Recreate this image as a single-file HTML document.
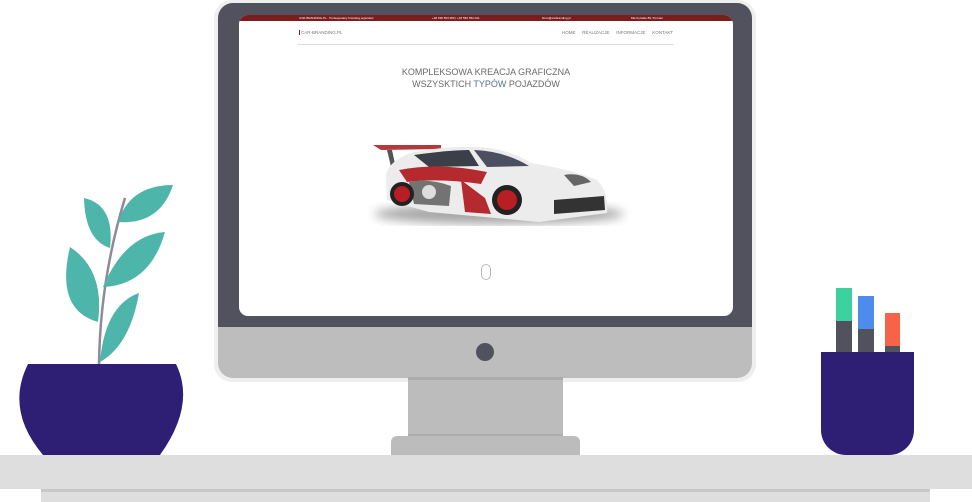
<!DOCTYPE html>
<html><head><meta charset="utf-8"><style>
*{margin:0;padding:0;box-sizing:border-box}
body{width:972px;height:502px;background:#fff;position:relative;overflow:hidden;font-family:"Liberation Sans",sans-serif}
.a{position:absolute}
</style></head><body>
<!-- desk -->
<div class="a" style="left:0;top:455px;width:972px;height:34px;background:#dedede"></div>
<div class="a" style="left:41px;top:489px;width:889px;height:13px;background:#dedede;border-top:3px solid #c8c8c8"></div>
<!-- monitor -->
<div class="a" style="left:214px;top:0;width:542px;height:382px;background:#efefef;border-radius:18px"></div>
<div class="a" style="left:218px;top:3px;width:534px;height:375px;background:#bdbdbd;border-radius:15px;overflow:hidden">
  <div style="height:324px;background:#52525f"></div>
</div>
<div class="a" style="left:476px;top:343px;width:18px;height:18px;border-radius:50%;background:#52525f"></div>
<div class="a" style="left:408px;top:377px;width:155px;height:60px;background:#bcbcbc;border-top:3px solid #acacac;border-bottom:3px solid #acacac"></div>
<div class="a" style="left:391px;top:436px;width:189px;height:19px;background:#bcbcbc;border-radius:6px 6px 0 0"></div>
<!-- screen -->
<div class="a" style="left:239px;top:15px;width:494px;height:301px;background:#fff;border-radius:9px;overflow:hidden">
  <div style="height:6px;background:#7c1d1d;font-size:3px;color:#fff;position:relative">
    <span class="a" style="left:60px;top:1px">CAR-BRANDING.PL · Profesjonalny branding pojazdów</span>
    <span class="a" style="left:193px;top:1px">+48 695 553 980 | +48 566 552 021</span>
    <span class="a" style="left:303px;top:1px">biuro@carbranding.pl</span>
    <span class="a" style="left:392px;top:1px">Mierzyńskie 89, Poznań</span>
  </div>
  <div class="a" style="left:60px;top:15px;font-size:4.5px;color:#777;border-left:1px solid #7c1d1d;padding-left:1px">CAR-BRANDING.PL</div>
  <div class="a" style="left:323px;top:15px;font-size:4.5px;color:#777;word-spacing:1px">HOME&nbsp;&nbsp; REALIZACJE&nbsp;&nbsp; INFORMACJE&nbsp;&nbsp; KONTAKT</div>
  <div class="a" style="left:59px;top:29px;width:376px;height:1px;background:#ddd"></div>
  <div class="a" style="left:0;top:51px;width:494px;text-align:center;font-size:9px;line-height:12px;color:#6a6a6a">KOMPLEKSOWA KREACJA GRAFICZNA<br>WSZYSKTICH <span style="color:#5a6f8a">TYPÓW</span> POJAZDÓW</div>
  <svg class="a" style="left:100px;top:118px" width="300" height="110" viewBox="330 133 300 110">
    <defs><filter id="b"><feGaussianBlur stdDeviation="5"/></filter></defs>
    <ellipse cx="490" cy="214" rx="125" ry="10" fill="#000" opacity="0.35" filter="url(#b)"/>
    <path d="M364 145 L432 145 L432 149 L372 150 Z" fill="#b5393b"/>
    <path d="M378 150 L384 175 L388 173 L383 150 Z" fill="#555"/>
    <path d="M377 175 Q380 160 405 152 Q440 146 460 147 Q495 146 522 163 Q565 170 588 180 Q600 192 598 213 L530 222 L420 212 L378 200 Z" fill="#ececec"/>
    <path d="M405 155 Q440 150 460 150 L470 166 L420 167 Z" fill="#3b3f48"/>
    <path d="M465 150 Q495 151 520 166 L478 167 Z" fill="#4a5060"/>
    <path d="M390 170 Q430 162 478 172 L472 184 Q430 178 398 182 Z" fill="#b52a2e"/>
    <path d="M452 180 L476 198 L482 214 L456 212 Z" fill="#b52a2e"/>
    <path d="M400 182 Q420 178 442 186 L440 206 L405 204 Z" fill="#555" opacity="0.8"/>
    <circle cx="420" cy="192" r="7" fill="#ddd"/>
    <path d="M545 200 L595 196 L596 210 L545 214 Z" fill="#333"/>
    <path d="M555 175 Q572 172 582 182 L565 186 Z" fill="#666"/>
    <circle cx="393" cy="194" r="12" fill="#222"/><circle cx="393" cy="194" r="8" fill="#b81e24"/>
    <circle cx="498" cy="200" r="15" fill="#222"/><circle cx="498" cy="200" r="10" fill="#b81e24"/>
  </svg>
  <div class="a" style="left:242px;top:249px;width:10px;height:16px;border:1px solid #bbb;border-radius:5px"></div>
</div>
<!-- plant -->
<svg class="a" style="left:0;top:170px" width="250" height="290" viewBox="0 170 250 290">
  <path d="M99 365 Q100 280 125 198" stroke="#8e8a98" stroke-width="2.5" fill="none"/>
  <path d="M118 222 Q130 185 173 185 Q160 225 118 222Z" fill="#4db5a9"/>
  <path d="M84 198 Q115 205 110 248 Q85 240 84 198Z" fill="#4db5a9"/>
  <path d="M103 287 Q125 235 165 232 Q150 285 103 287Z" fill="#4db5a9"/>
  <path d="M70 247 Q105 270 98 322 Q55 310 70 247Z" fill="#4db5a9"/>
  <path d="M100 362 Q105 305 139 293 Q130 345 100 362Z" fill="#4db5a9"/>
  <path d="M28 364 L176 364 Q196 405 160 455 L43 455 Q5 410 28 364Z" fill="#2e1f74"/>
</svg>
<!-- pens -->
<div class="a" style="left:836px;top:288px;width:16px;height:66px;background:#52525f;border-top:33px solid #3cd29f"></div>
<div class="a" style="left:858px;top:296px;width:16px;height:58px;background:#52525f;border-top:33px solid #4d8ced"></div>
<div class="a" style="left:885px;top:313px;width:15px;height:41px;background:#52525f;border-top:33px solid #f86248"></div>
<div class="a" style="left:821px;top:352px;width:93px;height:103px;background:#2e1f74;border-radius:0 0 25px 25px"></div>
</body></html>
